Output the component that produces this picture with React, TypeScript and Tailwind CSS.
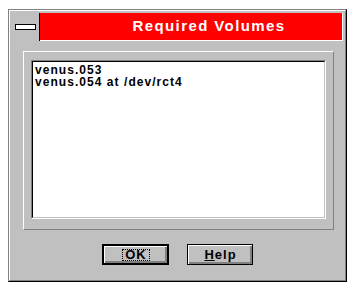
import React from 'react'

const volumes = ['venus.053', 'venus.054 at /dev/rct4']

function Button({ children, isDefault = false }: { children: React.ReactNode; isDefault?: boolean }) {
  return (
    <div
      className={`h-[21px] bg-black ${isDefault ? 'w-[67px] p-[2px]' : 'w-[66px] p-px'}`}
    >
      <div className="flex h-full w-full items-center justify-center border-t border-l border-white bg-[#c0c0c0] shadow-[inset_-1px_-1px_0_#808080,inset_-2px_-2px_0_#808080]">
        {children}
      </div>
    </div>
  )
}

export default function App() {
  return (
    <div className="min-h-[291px] w-[356px] bg-white pt-[9px] pl-[8px] font-['Liberation_Sans',Arial,sans-serif]">
      {/* Window frame */}
      <div className="h-[273px] w-[339px] border-t border-l border-[#808080] border-r border-b border-r-black border-b-black">
        <div className="h-full w-full border-t border-l border-white border-r border-b border-r-[#808080] border-b-[#808080] bg-[#c0c0c0] px-[2px] pt-[2px]">
          {/* Title bar */}
          <div className="flex h-[28px]">
            <div className="flex w-[28px] items-center justify-center border-r border-black bg-[#c0c0c0]">
              <div className="mt-[-1px] h-[6px] w-[21px] border border-black bg-white" />
            </div>
            <div className="flex flex-1 items-center justify-center border-r border-b border-white bg-[#ff0000] pl-[36px] text-[15px] font-bold tracking-[1.4px] text-white">
              Required Volumes
            </div>
          </div>

          {/* Raised panel with list */}
          <div className="mt-[10px] ml-[11px] mr-[9px] h-[179px] border-t border-l border-white border-r border-b border-r-[#808080] border-b-[#808080] px-[7px] pt-[8px] pb-[10px]">
            <div className="h-full border-t border-l border-[#808080] border-r border-b border-r-white border-b-white">
              <div className="h-full border-t border-l border-black border-r border-b border-r-[#c0c0c0] border-b-[#c0c0c0] bg-white px-[2px] pt-[2px]">
                {volumes.map((v) => (
                  <div key={v} className="text-[12px] font-bold leading-[12px] tracking-[1.05px] text-black">
                    {v}
                  </div>
                ))}
              </div>
            </div>
          </div>

          {/* Buttons */}
          <div className="mt-[14px] flex justify-center gap-[18px]">
            <Button isDefault>
              <span className="border border-dotted border-black px-[2px] text-[13px] leading-[10px] font-bold tracking-[1px] text-black">
                OK
              </span>
            </Button>
            <Button>
              <span className="text-[13px] font-bold tracking-[1px] text-black">
                <span className="underline">H</span>elp
              </span>
            </Button>
          </div>
        </div>
      </div>
    </div>
  )
}
